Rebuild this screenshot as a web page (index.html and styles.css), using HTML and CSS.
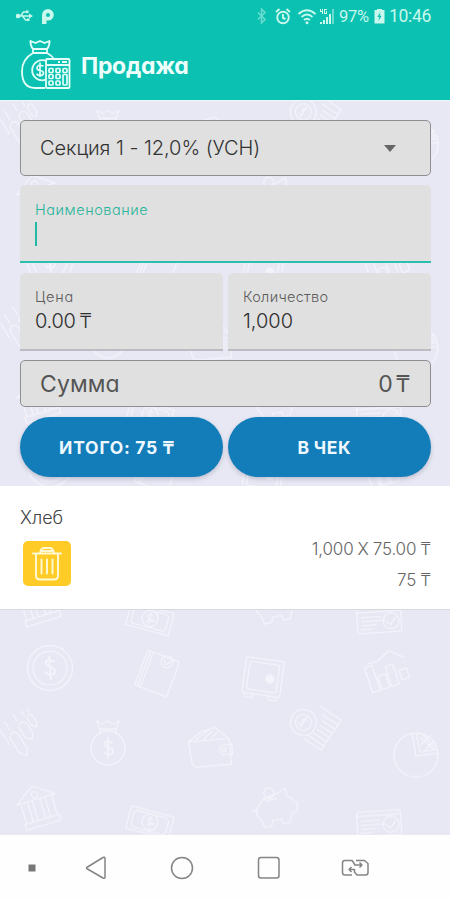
FILE: index.html
```html
<!DOCTYPE html>
<html lang="ru">
<head>
<meta charset="utf-8">
<meta name="viewport" content="width=device-width">
<title>Продажа</title>
<link rel="stylesheet" href="styles.css">
</head>
<body>
<div class="app">
  <header class="top">
    <div class="status">
      <div class="status-left">
        <svg width="17" height="14" viewBox="0 0 17 14" fill="none" stroke="currentColor" stroke-width="1.400"><path d="M2 7h13M4.500 7l3-4h3M6.500 7l3 4h2"/><circle cx="2" cy="7" r="1.600" fill="currentColor"/><path d="M13 4.500l4 2.500-4 2.500zM10 1.500h2.500v2.500h-2.500zM11 9.500h2.500v2.500H11z" fill="currentColor" stroke="none"/></svg>
        <svg width="14" height="17" viewBox="0 0 14 17"><path fill="currentColor" fill-rule="evenodd" d="M7 1a5.800 5.800 0 1 1 0 11.600H5.500V16H1V7a6 6 0 0 1 6-6zM7 5a2 2 0 1 0 0 4 2 2 0 0 0 0-4z"/></svg>
      </div>
      <div class="status-right">
        <svg class="dim" width="11" height="16" viewBox="0 0 11 16" fill="none" stroke="currentColor" stroke-width="1.500"><path d="M2 4.500l7 7L5.500 15V1L9 4.500l-7 7"/></svg>
        <svg class="alarm" width="16" height="17" viewBox="0 0 16 17" fill="none" stroke="currentColor" stroke-width="1.900"><circle cx="8" cy="9.500" r="5.800"/><path d="M8 6v4l2.500 1M1 4l3.500-3M15 4l-3.500-3"/></svg>
        <svg class="wifi" width="20" height="17" viewBox="0 0 20 17" fill="none" stroke="currentColor" stroke-width="1.900"><path d="M1.500 6Q10-1.500 18.500 6M4.500 9Q10 4 15.500 9M7 12Q10 9.500 13 12"/><circle cx="10" cy="14.800" r="1.500" fill="currentColor" stroke="none"/></svg>
        <svg class="signal" width="16" height="17" viewBox="0 0 16 17" fill="currentColor"><path d="M1 14h2v2H1zM4 12h2v4H4zM7 9h2v7H7zM10 6h2v10h-2z"/><path d="M13 1h2v15h-2z" opacity=".5"/><path d="M1 1h1v2h1V1h1v5H3V4H1zM5 1h3v1H6v3h1V3h1v3H5z"/></svg>
        <span class="pct">97%</span>
        <svg class="batt" width="11" height="16" viewBox="0 0 11 16"><path d="M3 1h5v1h2.500v13.500H.5V2H3z" fill="currentColor"/><path d="M6.500 4L3.300 9h1.900L4.500 13l3.200-5.200H5.800z" fill="#0bc1b2"/></svg>
        <span class="clock">10:46</span>
      </div>
    </div>
    <div class="title">
      <svg width="52" height="52" viewBox="0 0 52 52" fill="none" stroke="#e3fff8" stroke-width="1.800" stroke-linejoin="round">
        <path d="M13 10Q10 6 10.500 2l5 2 4.500-2 4.500 2 5-2q.5 4-2.500 8zM13 10v4h14v-4M13 14C6 18 2 24 2 32c0 11 4 17 13 17h10M27 14c4 2 6 4 8 7"/>
        <path d="M27 22.500a10 10 0 1 0-1 18"/>
        <path d="M23.500 27q-6.500-2-6.500 2c0 4 6.500 1 6.500 5 0 3-4.500 3-7 1M20 23.500v14.500" stroke-width="1.700"/>
        <rect x="26" y="20" width="23.500" height="29" rx="1"/><path d="M26 26h24M38 23h2M42 23h5"/>
        <g stroke-width="1.700"><rect x="29" y="29.500" width="4" height="4" rx="1"/><rect x="36" y="29.500" width="4" height="4" rx="1"/><rect x="43" y="29.500" width="4" height="4" rx="1"/><rect x="29" y="35.500" width="4" height="4" rx="1"/><rect x="36" y="35.500" width="4" height="4" rx="1"/><rect x="43" y="35.500" width="4" height="10.500" rx="1"/><rect x="29" y="42" width="4" height="4" rx="1"/><rect x="36" y="42" width="4" height="4" rx="1"/></g>
      </svg>
      <h1><span>Продажа</span></h1>
    </div>
  </header>

  <main class="content">
    <svg class="wallpaper" width="450" height="735">
      <defs>
        <pattern id="money" x="0" y="538" width="450" height="203.500" patternUnits="userSpaceOnUse">
          <g fill="none" stroke="#f8f8fe" stroke-width="1.300" stroke-linejoin="round">
            <g transform="translate(50 30)"><circle r="22.500"/><circle r="17"/><path d="M5-6q-9-4-9 1c0 5 9 3 9 8s-7 5-10 1M-1-12l2 24" stroke-width="2"/></g>
            <g transform="translate(157 36) rotate(21)"><rect x="-17" y="-19" width="34" height="37" rx="2"/><path d="M-11-19v37M-14-19v37"/><circle cx="5" cy="-15" r="6"/><path d="M1-16l4 4 5-6"/></g>
            <g transform="translate(263 40) rotate(8)"><rect x="-19" y="-19" width="38" height="36" rx="2"/><rect x="-15" y="-15" width="30" height="28" rx="2"/><circle cx="7" cy="0" r="4" fill="#f8f8fe"/><path d="M-16 17v4h8v-4M8 17v4h8v-4"/></g>
            <g transform="translate(387 31) rotate(-18)"><path d="M-21-8h8v26h-8zM-11 4h8v14h-8zM-1-3h8v21h-8zM11 5h8v10h-8zM-18-11l11 1L7-17l13 11"/></g>
            <g transform="translate(20 97) rotate(-32)"><path d="M-5 21l-5-6V-3q5-6 9 0v18zM8 10l-5-5v-12q4-6 9 0V5zM18 2l-3-4v-8q3-5 6 0v8zM-6-9v-11M5-13v-9M-14 3v-18M14-13v-7M20-14v-5"/></g>
            <g transform="translate(108 105)"><path d="M-8-14q-3-4-3-8l5 3 5-3 6 3 6-3-3 8zM-8-14v4M8-14v4"/><circle cy="5" r="17"/><path d="M5 0q-8-4-8 1c0 5 8 2 8 7s-7 4-9 1M0-6v22" stroke-width="1.800"/></g>
            <g transform="translate(210 110) rotate(-5)"><path d="M-21-8h38q3 0 3 3v23h-34q-4 0-5-4zM-21-8l14-9 14-3 12 12M-14-9l14-9M-6-9l10-8M2-9l7-7M22-2H12q-5 5 0 10h10z"/><circle cx="14" cy="3" r="2"/></g>
            <g transform="translate(315 85) rotate(34)"><path d="M-5-17h25v36H0M1-11h19M4-6h16M5-1h15M5 4h15M3 9h17M0 14h20"/><circle cx="-10" cy="6" r="13"/><circle cx="-10" cy="6" r="8"/><path d="M-8 2q-6 0-3 4t-3 4M-10-1v13"/></g>
            <g transform="translate(416 117)"><circle r="22"/><path d="M-4-22L0 1l22-3M0-22L4-3l17-3M4-18l14 13M7-20l12 13M5-10l10-10M9-5l9-9"/></g>
            <g transform="translate(38 168) rotate(-17)"><path d="M-20-7L0-21 20-7zM-18 14h36v6h-36zM-16-7v21M-9-7v21M-4-7v21M4-7v21M9-7v21M16-7v21"/><circle cy="-12" r="3"/></g>
            <g transform="translate(150 184) rotate(15)"><rect x="-22" y="-11" width="44" height="23"/><rect x="-18" y="-8" width="36" height="17" rx="4"/><circle r="8"/><path d="M3-3q-6-2-6 1t6 3-6 2M0-6v12"/></g>
            <g transform="translate(275 170) rotate(-12)"><path d="M-16-5q6-8 18-8l12-4v7q5 4 6 8l3 1-2 8-5 1-4 9h-7l-1-5H-5l-2 5h-7l-2-9q-7-6 0-13z"/><circle cx="-3" cy="-16" r="5"/><path d="M-8-9h13M-17 0l-6-3"/></g>
            <g transform="translate(380 184) rotate(-4)"><rect x="-23" y="-11" width="44" height="25" rx="2"/><path d="M-23-7h44M-19-2h20M-19 2h24M-19 6h15M-20 10h13"/><circle cx="11" cy="3" r="8"/><path d="M6 3l4 4 6-8"/></g>
          </g>
        </pattern>
      </defs>
      <rect width="450" height="735" fill="url(#money)"/>
    </svg>

    <form class="form">
      <div class="box select"><span class="t-select">Секция 1 - 12,0% (УСН)</span><i class="caret"></i></div>
      <div class="field name"><label class="t-name">Наименование</label><i class="cursor"></i></div>
      <div class="pair">
        <div class="field small"><label class="t-price">Цена</label><span class="value t-zero">0.00 ₸</span></div>
        <div class="field small"><label class="t-qty">Количество</label><span class="value t-one">1,000</span></div>
      </div>
      <div class="box sum"><span class="t-sum">Сумма</span><span class="t-total">0 ₸</span></div>
      <div class="pair buttons">
        <button type="button"><span class="t-itogo">ИТОГО: 75 ₸</span></button>
        <button type="button"><span class="t-check">В ЧЕК</span></button>
      </div>
    </form>

    <section class="item">
      <div class="item-name"><span class="t-bread">Хлеб</span></div>
      <div class="item-row">
        <div class="trash"><svg width="48" height="46" viewBox="0 0 48 46" fill="none" stroke="#fff9d6" stroke-width="1.900" stroke-linecap="round" stroke-linejoin="round"><path d="M10 12.500h28M13 12.500v22q0 4 4 4h14q4 0 4-4v-22M17 12q1-5 4-5h6q3 0 4 5M19 10h10M18.500 18.500v14M24 18.500v14M29.500 18.500v14"/></svg></div>
        <div class="amounts"><span class="t-calc">1,000 X 75.00 ₸</span><span class="t-75">75 ₸</span></div>
      </div>
    </section>
  </main>

  <nav class="nav">
    <svg width="450" height="65" viewBox="0 0 450 65" fill="none" stroke="#858585" stroke-width="1.500" stroke-linejoin="round"><rect x="28.500" y="29.500" width="7" height="7" fill="#777" stroke="none"/><path d="M103 22.500q2-1 2 1v18.500q0 2-2 1L87.500 34q-2-1 0-2z"/><circle cx="182" cy="33" r="10.500"/><rect x="258.500" y="22.500" width="20.500" height="20.500" rx="2.500"/><path d="M352 40h-7q-2.500 0-2.500-2.500V28q0-2.500 2.500-2.500h7l2.500 3.500v1h7M356 25.500h8.500l3.500 3v9q0 2.500-2.500 2.500H357l-2.500-3v-2.500H349M359.500 27.500l2.500 2.500-2.500 2.500M351.500 32L349 34.500l2.500 2.500"/></svg>
  </nav>
</div>
</body>
</html>
```
FILE: styles.css
```css
* { box-sizing: border-box; }
body { margin: 0; font-family: Inter, "Noto Sans", sans-serif; font-feature-settings: "cv11"; color: #4c4c4c; }
.app { width: 450px; height: 900px; display: flex; flex-direction: column; overflow: hidden; background: #fff; }
span, label { white-space: nowrap; }
svg { display: block; flex: none; }

.top { height: 100px; background: #0bc1b2; color: #c9f8ec; flex: none; }
.status { height: 32px; display: flex; justify-content: space-between; padding: 0 18px 0 16px; font-family: Roboto, sans-serif; }
.status-left, .status-right { display: flex; align-items: center; }
.status-left { gap: 8px; }
.dim { opacity: .5; margin-right: 8px; }
.alarm { margin-right: 6px; }
.wifi { margin-right: 2px; }
.signal { margin-right: 4px; }
.pct { font-size: 16.5px; width: 31px; letter-spacing: -.3px; }
.batt { margin: 0 4px 0 4px; }
.clock { font-size: 17.5px; width: 43px; letter-spacing: -.3px; }
.title { display: flex; padding: 7px 0 0 20px; gap: 9px; }
h1 { margin: 0; font-size: 23px; line-height: 54px; color: #edfffb; font-weight: 700; letter-spacing: -.3px; }

.content { position: relative; height: 735px; flex: none; background: #e8e8f4; border-top: 1px solid #eefafa; }
.wallpaper { position: absolute; left: 0; top: -1px; opacity: .72; }
.form { position: relative; height: 385px; padding: 19px 19px 0 20px; display: flex; flex-direction: column; }
.box { background: #e0e0e0; border: 1px solid #8e8e93; border-radius: 5px; display: flex; align-items: center; justify-content: space-between; padding: 0 20px 0 19px; }
.select { height: 56px; font-size: 20px; font-weight: 300; color: #333; padding-right: 34px; }
.t-select { letter-spacing: -.05px; }
.caret { border: 6px solid transparent; border-top: 7px solid #666; border-bottom: 0; }
.field { background: #e0e0e0; border-radius: 5px 5px 0 0; display: flex; flex-direction: column; align-items: flex-start; }
.name { margin-top: 9px; height: 78px; border-bottom: 2px solid #2dbfae; padding: 15px 15px 0; }
.name label { font-size: 14.5px; line-height: 20px; font-weight: 300; color: #28b49b; letter-spacing: .55px; }
.cursor { width: 2px; height: 24px; margin-top: 2px; background: #1fb9a5; }
.pair { display: flex; gap: 5px; }
.name + .pair { margin-top: 10px; }
.small { flex: 1; height: 78px; border-bottom: 2px solid #bcbcc2; padding: 15px 14px 0 15px; }
.small label { font-size: 14.5px; line-height: 18px; font-weight: 300; color: #5c5c5c; letter-spacing: .3px; }
.small .t-price { letter-spacing: .8px; }
.value { font-size: 20px; line-height: 31px; font-weight: 300; color: #2e2e2e; }
.t-zero { letter-spacing: -.3px; word-spacing: -1.5px; }
.sum { height: 47px; margin-top: 9px; font-size: 23px; color: #555; }
.t-sum { letter-spacing: .1px; }
.t-total { word-spacing: -3px; letter-spacing: -.4px; }
.buttons { margin-top: 10px; }
button { flex: 1; height: 60px; border: 0; border-radius: 30px; background: #127db8; color: #eef8ff; font: 700 17.500px Inter, "Noto Sans", sans-serif; padding: 0; box-shadow: 0 2px 4px rgba(60, 60, 90, .25); }
.t-itogo { letter-spacing: .8px; word-spacing: -.5px; margin-right: 9px; }
.t-check { letter-spacing: .7px; word-spacing: -1px; margin-right: 10px; }
.item { position: relative; height: 124px; background: #fff; padding: 20px 19px 0 20px; border-bottom: 1px solid #d8d8dc; color: #666; }
.item-name { font-size: 18px; line-height: 24px; font-weight: 300; color: #444; }
.item-row { display: flex; justify-content: space-between; }
.trash { width: 48px; height: 45px; margin: 11px 0 0 3px; border-radius: 5px; background: #fecb27; }
.amounts { display: flex; flex-direction: column; align-items: flex-end; font-size: 17px; line-height: 31px; padding-top: 4px; font-weight: 300; }
.t-calc { letter-spacing: -.15px; word-spacing: -.6px; }
.t-75 { word-spacing: -1px; }
.nav { height: 65px; background: #fefefe; }
```
